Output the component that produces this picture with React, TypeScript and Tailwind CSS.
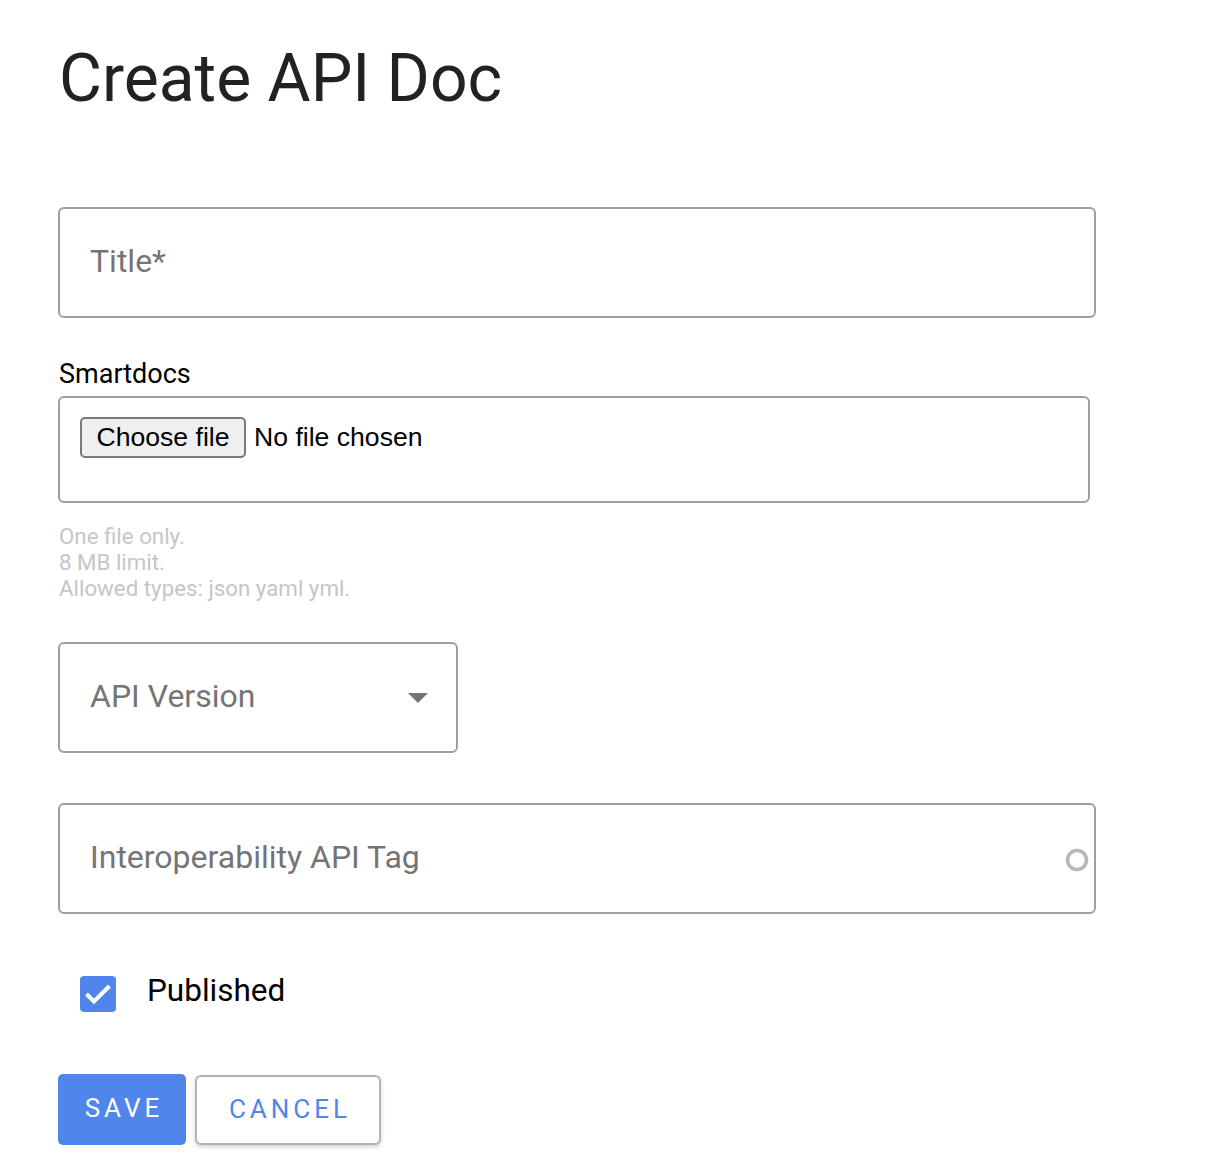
import React from 'react';

const roboto = { fontFamily: 'Roboto, "Noto Sans", sans-serif' };

function Field({ placeholder, width, right }: { placeholder: string; width: string; right?: React.ReactNode }) {
  return (
    <div
      className={`relative flex h-[111px] items-center rounded-[6px] border-2 border-[#9f9f9f] bg-white pl-[30px] pb-[3px] ${width}`}
    >
      <span className="text-[32px] leading-[38px] text-[#757575]">{placeholder}</span>
      {right}
    </div>
  );
}

export default function App() {
  return (
    <div className="min-h-[1174px] w-[1216px] bg-white px-[58px] pt-[46px]" style={roboto}>
      <h1 className="pl-[1px] text-[66px] font-normal leading-none text-[#222222]">Create API Doc</h1>

      <div className="mt-[95px]">
        <Field placeholder="Title*" width="w-[1038px]" />
      </div>

      <label className="mt-[40px] block pl-[1px] text-[27px] leading-[32px] text-black">Smartdocs</label>
      <div className="mt-[6px] h-[107px] w-[1032px] rounded-[6px] border-2 border-[#9f9f9f] pl-[20px] pt-[19px]">
        <div className="flex items-center" style={{ fontFamily: '"Liberation Sans", Arial, sans-serif' }}>
          <span className="flex h-[41px] w-[166px] items-center justify-center rounded-[5px] border-2 border-[#7a7a7a] bg-[#efefef] text-[26.6px] text-black">
            Choose file
          </span>
          <span className="ml-[8px] text-[26.6px] text-black">No file chosen</span>
        </div>
      </div>

      <div className="mt-[20px] pl-[1px] text-[22.3px] leading-[26px] text-[#c6c6c6]">
        <div>One file only.</div>
        <div>8 MB limit.</div>
        <div>Allowed types: json yaml yml.</div>
      </div>

      <div className="mt-[41px]">
        <Field
          placeholder="API Version"
          width="w-[400px]"
          right={
            <svg className="absolute right-[28px] top-[49px]" width="20" height="10" viewBox="0 0 20 10">
              <path d="M0 0 L20 0 L10 10 Z" fill="#757575" />
            </svg>
          }
        />
      </div>

      <div className="mt-[50px]">
        <Field
          placeholder="Interoperability API Tag"
          width="w-[1038px]"
          right={
            <svg className="absolute right-[4px] top-[42px] blur-[0.6px]" width="26" height="26" viewBox="0 0 26 26">
              <circle cx="13" cy="13" r="9.5" fill="none" stroke="#b8b8b8" strokeWidth="3.6" />
            </svg>
          }
        />
      </div>

      <div className="mt-[62px] flex h-[36px] items-center pl-[22px]">
        <span className="flex h-[36px] w-[36px] items-center justify-center rounded-[4px] bg-[#5086ec]">
          <svg width="36" height="36" viewBox="0 0 36 36">
            <path d="M6.5 18 L14 25.5 L29.5 10" fill="none" stroke="white" strokeWidth="4" />
          </svg>
        </span>
        <span className="ml-[31px] pb-[6px] text-[31.5px] leading-[36px] text-black">Published</span>
      </div>

      <div className="mt-[62px] flex items-start">
        <button className="flex h-[71px] w-[128px] items-center justify-center rounded-[5px] bg-[#5086ec] pl-[4px] pb-[2px] text-[26px] tracking-[4px] text-white">
          SAVE
        </button>
        <button className="ml-[9px] mt-[1px] flex h-[70px] w-[186px] items-center justify-center rounded-[6px] border-2 border-[#b3b3b3] bg-white pl-[4px] pb-[2px] text-[26px] tracking-[4px] text-[#5086ec] shadow-[0_2px_4px_rgba(0,0,0,0.18)]">
          CANCEL
        </button>
      </div>
    </div>
  );
}
